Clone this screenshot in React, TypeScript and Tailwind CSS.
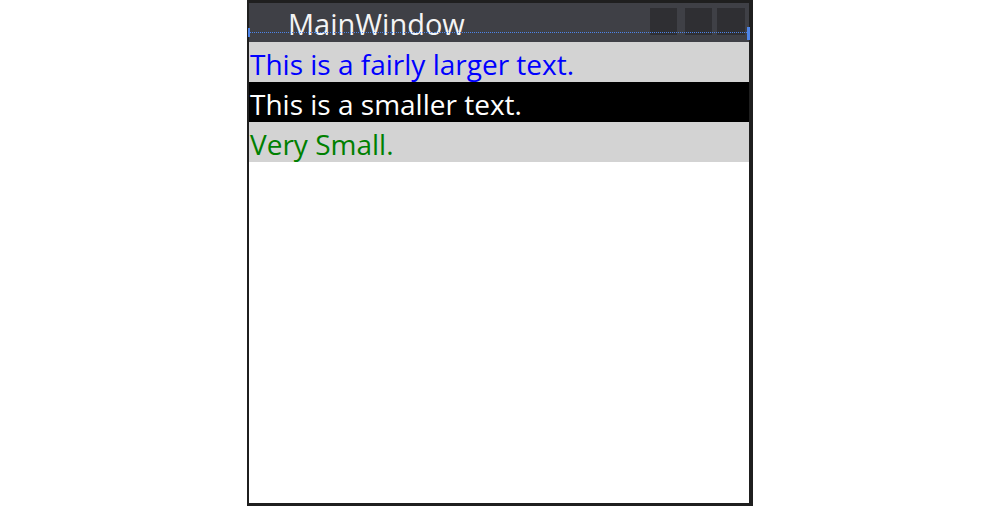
export default function App() {
  const rows = [
    { text: 'This is a fairly larger text.', cls: 'bg-[#d3d3d3] text-[#0000ff]' },
    { text: 'This is a smaller text.', cls: 'bg-black text-white' },
    { text: 'Very Small.', cls: 'bg-[#d3d3d3] text-[#008000]' },
  ]

  return (
    <div className="w-full h-[506px] bg-white font-['Open_Sans',sans-serif]">
      <div className="mx-auto w-[506px] h-[506px] bg-[#1f1f1f] pt-[3px] pl-[2px] pr-[4px] pb-[3px] flex flex-col">
        <div className="relative h-[39px] bg-[#3f4046] flex items-start">
          <span className="pl-[39px] pt-[6px] text-[29px] leading-[30px] whitespace-nowrap text-[#f4f4f4]">MainWindow</span>
          <div className="ml-auto mt-[5px] mr-[4px] flex">
            <div className="w-[27px] h-[27px] bg-[#2f2f33]" />
            <div className="ml-[8px] w-[27px] h-[27px] bg-[#2f2f33]" />
            <div className="ml-[5px] w-[28px] h-[27px] bg-[#2f2f33]" />
          </div>
          <div className="absolute left-0 right-0 top-[29px] border-t border-dotted border-[#4d84e8]" />
          <div className="absolute -left-[1px] top-[25px] w-[2px] h-[9px] bg-[#4d84e8]" />
          <div className="absolute -right-[1px] top-[24px] w-[3px] h-[13px] bg-[#4d84e8]" />
        </div>
        <div className="flex-1 bg-white overflow-hidden">
          {rows.map((r) => (
            <div key={r.text} className={`h-[40px] pl-[1px] pt-[4px] text-[28px] leading-[36px] whitespace-nowrap ${r.cls}`}>
              {r.text}
            </div>
          ))}
        </div>
      </div>
    </div>
  )
}
